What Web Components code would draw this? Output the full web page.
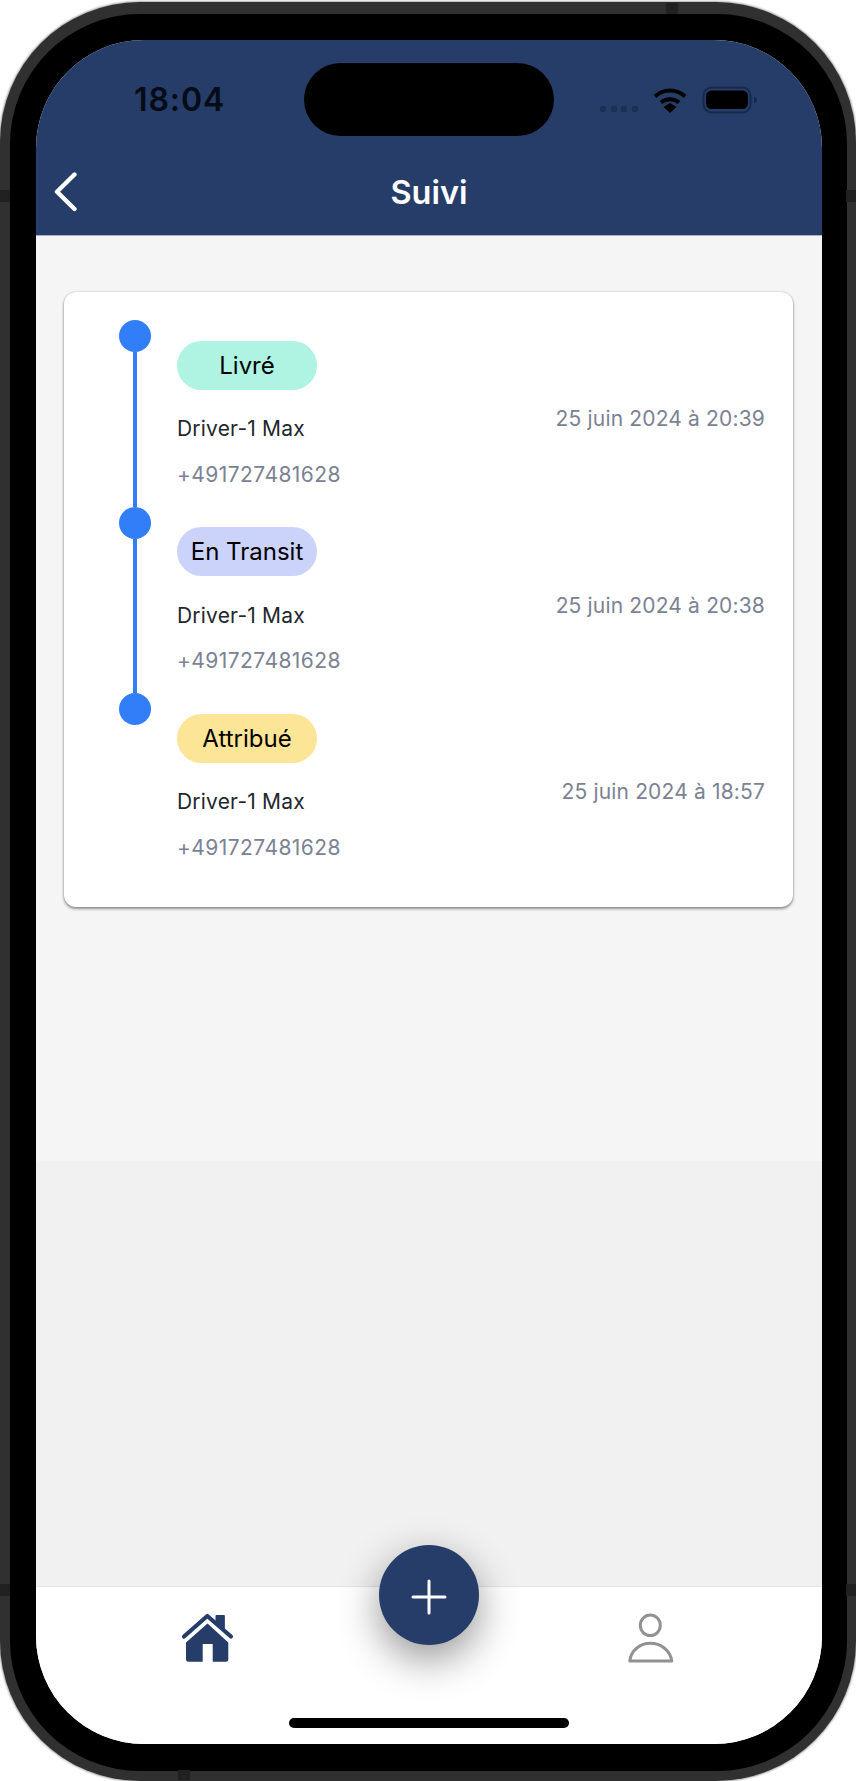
<!DOCTYPE html>
<html lang="fr">
<head>
<meta charset="utf-8">
<title>Suivi</title>
<style>
  html, body { margin: 0; background: #fff; }
  body { font-family: Inter, "Noto Sans", sans-serif; }
</style>
</head>
<body>
<phone-frame>
  <app-header title="Suivi"></app-header>
  <tracking-view>
    <timeline-entry status="Livré" tone="#aff3e2">
      <span slot="driver">Driver-1 Max</span>
      <span slot="phone">+491727481628</span>
      <span slot="date">25 juin 2024 à 20:39</span>
    </timeline-entry>
    <timeline-entry status="En Transit" tone="#cbd3fb">
      <span slot="driver">Driver-1 Max</span>
      <span slot="phone">+491727481628</span>
      <span slot="date">25 juin 2024 à 20:38</span>
    </timeline-entry>
    <timeline-entry status="Attribué" tone="#fce596" last>
      <span slot="driver">Driver-1 Max</span>
      <span slot="phone">+491727481628</span>
      <span slot="date">25 juin 2024 à 18:57</span>
    </timeline-entry>
  </tracking-view>
  <bottom-nav></bottom-nav>
</phone-frame>

<script>
(function() {
  function define(name, html, init) {
    const template = document.createElement('template');
    template.innerHTML = html;
    customElements.define(name, class extends HTMLElement {
      constructor() {
        super();
        this.attachShadow({mode: 'open'});
        this.shadowRoot.appendChild(template.content.cloneNode(true));
      }
      connectedCallback() {
        if(init) init(this, this.shadowRoot);
      }
    });
  }

  define('phone-frame', `
    <style>
      :host {
        display: block;
        position: relative;
        width: 856px;
        height: 1781px;
        padding-top: 2px;
        box-sizing: border-box;
        overflow: hidden;
      }
      .rim {
        height: 100%;
        box-sizing: border-box;
        padding: 12px 9px 10px 10px;
        border-radius: 140px;
        background: #303030;
        box-shadow: 0 0 2px 1px #a8a8a8;
      }
      .bezel {
        height: 100%;
        box-sizing: border-box;
        padding: 26px 25px 27px 26px;
        border-radius: 130px;
        background: #000;
      }
      .screen {
        height: 100%;
        display: flex;
        flex-direction: column;
        border-radius: 108px;
        overflow: hidden;
        background: #f5f5f5;
      }
      .band { position: absolute; background: #212121; }
      .l, .r { width: 10px; height: 12px; }
      .l { left: 0; }
      .r { right: 0; }
      .y1 { top: 190px; }
      .y2 { top: 1584px; }
      .t { top: 3px; left: 666px; width: 12px; height: 11px; }
      .b { top: 1770px; left: 178px; width: 12px; height: 10px; }
    </style>
    <div class="rim"><div class="bezel"><div class="screen"><slot></slot></div></div></div>
    <i class="band l y1"></i><i class="band r y1"></i>
    <i class="band l y2"></i><i class="band r y2"></i>
    <i class="band t"></i><i class="band b"></i>
  `);

  define('status-bar', `
    <style>
      :host {
        display: grid;
        grid-template-columns: 268px 250px 268px;
        align-items: center;
        padding-top: 23px;
        height: 73px;
      }
      .time {
        padding-left: 98px;
        font: 600 32px Inter, sans-serif;
        letter-spacing: .9px;
        color: #060b16;
      }
      .island { height: 73px; border-radius: 37px; background: #000; }
      svg { display: block; margin-left: 46px; }
    </style>
    <span class="time">18:04</span>
    <div class="island"></div>
    <svg width="158" height="28" viewBox="600 84 158 28">
      <g fill="#1b3053">
        <circle cx="603" cy="107" r="3.2"/><circle cx="614" cy="107" r="3.2"/>
        <circle cx="624" cy="107" r="3.2"/><circle cx="635" cy="107" r="3.2"/>
      </g>
      <g fill="none" stroke="#000" stroke-width="4">
        <path d="M655 94.5c8.500-8 21.500-8 30 0"/>
        <path d="M661 100.500c5-4.500 13-4.500 18 0"/>
      </g>
      <path d="M663.500 105l6.500-4 6.500 4-6.500 6z" fill="#000"/>
      <rect x="703.500" y="85.500" width="47" height="25" rx="8" fill="none" stroke="#17294a" stroke-width="2"/>
      <rect x="706" y="88.500" width="42" height="18.500" rx="5.500" fill="#000"/>
      <path d="M754 94.500c2 .8 3 2 3 3.500s-1 2.700-3 3.500z" fill="#17294a"/>
    </svg>
  `);

  define('app-header', `
    <style>
      :host {
        display: block;
        height: 196px;
        flex: none;
        background: #253d68;
        border-bottom: 1px solid #a9b1c2;
        box-sizing: border-box;
      }
      .bar {
        display: grid;
        grid-template-columns: 1fr auto 1fr;
        align-items: center;
        padding-top: 32px;
        height: 46px;
      }
      .bar svg { display: block; margin-left: 17px; }
      h1 {
        margin: 2px 0 0;
        font: 600 32.500px/46px Inter, sans-serif;
        color: #fff;
      }
    </style>
    <status-bar></status-bar>
    <div class="bar">
      <svg width="26" height="40" viewBox="0 0 26 40" fill="none" stroke="#fff" stroke-width="4.400" stroke-linecap="round" stroke-linejoin="round">
        <path d="M21.500 2.500L4 19.700 21.500 37"/>
      </svg>
      <h1></h1>
      <span></span>
    </div>
  `, (el, root) => {
    root.querySelector('h1').textContent = el.getAttribute('title');
  });

  define('tracking-view', `
    <style>
      :host {
        display: block;
        flex: 1;
        min-height: 0;
        padding: 56px 29px 0 28px;
        background: linear-gradient(#f5f5f5 0 925px, #f1f1f1 925px);
      }
      .card {
        padding: 28px 28px 47.500px 55px;
        border-radius: 12px;
        background: #fff;
        box-shadow: 0 2px 3px rgba(0,0,0,.4), 0 0 2px rgba(0,0,0,.25);
      }
    </style>
    <div class="card"><slot></slot></div>
  `);

  define('timeline-entry', `
    <style>
      :host {
        display: flex;
        height: 186.500px;
        color: #23272e;
      }
      :host([last]) { height: auto; }
      :host([last]) .line { display: none; }
      .rail {
        flex: none;
        display: flex;
        flex-direction: column;
        align-items: center;
        width: 32px;
        margin-right: 26px;
      }
      .dot { flex: none; width: 32px; height: 32px; border-radius: 50%; background: #317ef8; }
      .line { flex: 1; width: 4px; background: #317ef8; }
      .info { padding-top: 20.700px; font: 400 21px/24px Inter, sans-serif; }
      .pill {
        display: flex;
        align-items: center;
        justify-content: center;
        width: 140px;
        height: 49px;
        box-sizing: border-box;
        padding-top: 1px;
        border-radius: 25px;
        font-size: 24px;
        color: #000;
      }
      .driver { margin-top: 27.600px; letter-spacing: .2px; }
      .phone { margin-top: 21.500px; color: #7b8294; letter-spacing: .43px; }
      .date {
        margin-left: auto;
        padding-top: 87px;
        font: 400 21px/24px Inter, sans-serif;
        letter-spacing: .16px;
        color: #7b8294;
      }
    </style>
    <div class="rail"><div class="dot"></div><div class="line"></div></div>
    <div class="info">
      <div class="pill"></div>
      <div class="driver"><slot name="driver"></slot></div>
      <div class="phone"><slot name="phone"></slot></div>
    </div>
    <div class="date"><slot name="date"></slot></div>
  `, (el, root) => {
    const pill = root.querySelector('.pill');
    pill.textContent = el.getAttribute('status');
    pill.style.background = el.getAttribute('tone');
  });

  define('bottom-nav', `
    <style>
      :host {
        display: grid;
        grid-template-columns: 343px 100px 343px;
        flex: none;
        position: relative;
        height: 158px;
        box-sizing: border-box;
        border-top: 1px solid #e4e4e4;
        background: #fff;
      }
      .tab { display: flex; justify-content: center; padding-top: 25px; }
      .tab svg { display: block; }
      .fab {
        display: flex;
        align-items: center;
        justify-content: center;
        width: 100px;
        height: 100px;
        margin-top: -42px;
        border-radius: 50%;
        background: #253d68;
        box-shadow: 0 14px 40px rgba(0,0,0,.42);
      }
      .fab svg { display: block; margin-top: 4px; }
      .home-bar {
        position: absolute;
        left: 253px;
        bottom: 16px;
        width: 280px;
        height: 10px;
        border-radius: 5px;
        background: #000;
      }
    </style>
    <div class="tab">
      <svg width="54" height="52" viewBox="0 0 54 52">
        <path d="M35 3.500h8.300v13L35 9z" fill="#253d68" stroke="#253d68" stroke-linejoin="round"/>
        <path d="M3 24.500L26.300 4 50 24.500" fill="none" stroke="#253d68" stroke-width="4.200" stroke-linecap="round" stroke-linejoin="round"/>
        <path d="M26.500 11.500L47.300 30.500V47.200a2.500 2.500 0 0 1-2.500 2.500H31.700V32H21.700V49.700H7.500a2.500 2.500 0 0 1-2.500-2.500V30.500z" fill="#253d68"/>
      </svg>
    </div>
    <div class="fab">
      <svg width="36" height="36" viewBox="0 0 36 36" stroke="#fff" stroke-width="3" stroke-linecap="round"><path d="M2 18h32M18 2v32"/></svg>
    </div>
    <div class="tab">
      <svg width="46" height="52" viewBox="0 0 46 52" fill="none" stroke="#929292" stroke-width="3" stroke-linejoin="round">
        <ellipse cx="22.300" cy="13.300" rx="10" ry="10.300"/>
        <path d="M1.800 49C3 38 12.500 31.300 22.500 31.300S42 38 43.800 49z"/>
      </svg>
    </div>
    <div class="home-bar"></div>
  `);
})();
</script>
</body>
</html>
